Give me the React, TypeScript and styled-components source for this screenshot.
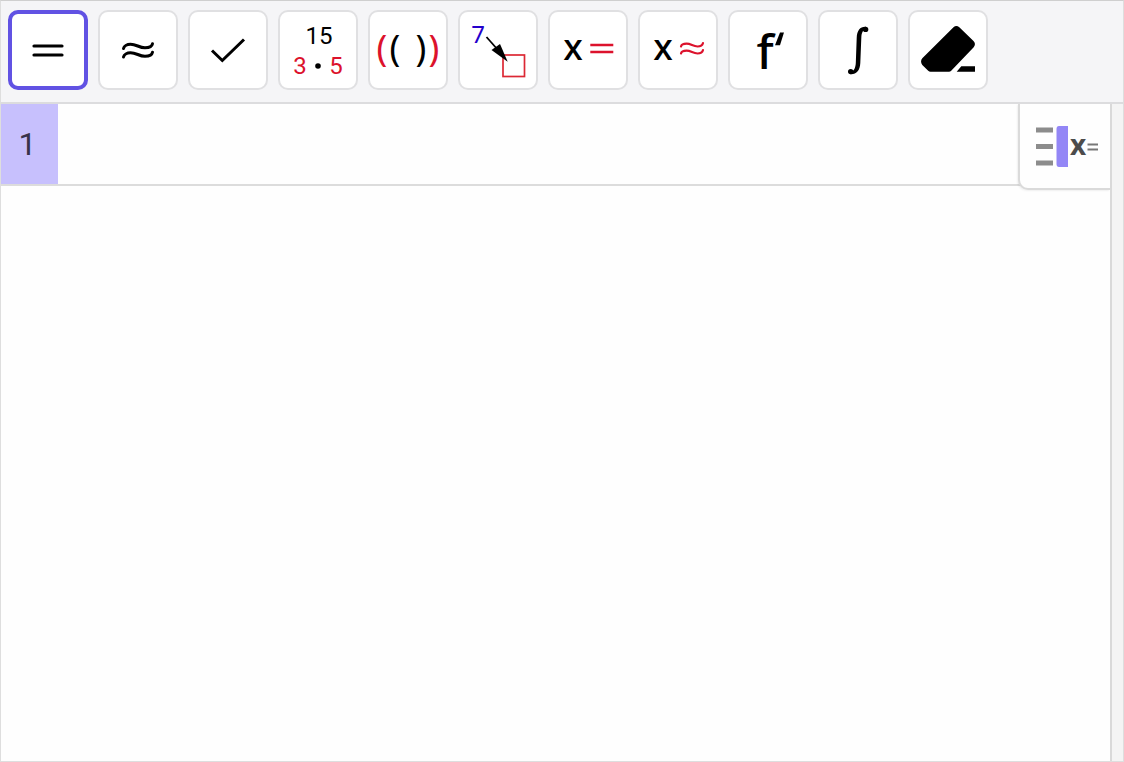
import React from "react";
import styled, { createGlobalStyle } from "styled-components";

const GlobalStyle = createGlobalStyle`
  *, *::before, *::after { box-sizing: border-box; }
  body {
    margin: 0;
    background: #fefefe;
    font-family: "Liberation Sans", Arial, sans-serif;
  }
`;

const Shell = styled.div`
  display: flex;
  flex-direction: column;
  min-height: 100vh;
  border: 1px solid #dedede;
  border-top-color: #cfcfcf;
`;

const Toolbar = styled.div`
  display: flex;
  flex-wrap: wrap;
  gap: 10px;
  padding: 9px 7px 12px;
  background: #f5f5f7;
  border-bottom: 2px solid #dcdcde;
`;

const ToolButton = styled.button<{ $selected?: boolean }>`
  display: flex;
  align-items: center;
  justify-content: center;
  width: 80px;
  height: 80px;
  padding: 0;
  border: ${(p) => (p.$selected ? "4px solid #6152e3" : "2px solid #e0e0e2")};
  border-radius: 10px;
  background: #fff;
  cursor: pointer;
`;

const ToolIcon = styled.svg`
  flex: none;
  width: 80px;
  height: 80px;
`;

const Body = styled.div`
  display: flex;
  flex: 1;
`;

const CasView = styled.main`
  position: relative;
  flex: 1;
  background: #fefefe;
`;

const Row = styled.div`
  display: flex;
  height: 82px;
  border-bottom: 2px solid #dcdcdc;
`;

const RowNumber = styled.label`
  display: flex;
  align-items: center;
  justify-content: center;
  width: 57px;
  padding-right: 4px;
  background: #c7c0fd;
  color: #37324a;
  font-family: Roboto, "Liberation Sans", sans-serif;
  font-size: 32px;
  line-height: 40px;
`;

const RowInput = styled.input`
  flex: 1;
  min-width: 0;
  padding: 0 104px 0 12px;
  border: 0;
  outline: 0;
  background: transparent;
  font: 28px "Liberation Sans", Arial, sans-serif;
`;

const StyleBarButton = styled.button`
  position: absolute;
  top: 0;
  right: 0;
  width: 92px;
  height: 86px;
  padding: 0;
  border: solid #dadada;
  border-width: 0 0 2px 2px;
  border-radius: 0 0 0 10px;
  background: #fefefe;
  box-shadow: -1px 1px 2px rgba(0, 0, 0, 0.06);
  cursor: pointer;
`;

const StyleBarIcon = styled.svg`
  display: block;
  width: 90px;
  height: 84px;
`;

const Gutter = styled.div`
  width: 13px;
  background: #f4f4f4;
  border-left: 2px solid #d9d9d9;
`;

const RED = "#dc122c";
const DIGITS = 'Roboto, "Noto Sans", sans-serif';
const LETTERS = '"Noto Sans", "Open Sans", sans-serif';

type Tool = { name: string; icon: React.ReactNode };

const tools: Tool[] = [
  {
    name: "Evaluate",
    icon: <path d="M26 36H54M26 45H54" stroke="#000" strokeWidth="3.2" strokeLinecap="round" />,
  },
  {
    name: "Numeric",
    icon: (
      <path
        d="M25.5 38.5C26 36 29 34.2 32.5 34.2C38.5 34.2 41 37.8 47 37.8C51 37.8 54 36.5 54.5 33.8M25.5 47C26 44.5 29 42.7 32.5 42.7C38.5 42.7 41 46.3 47 46.3C51 46.3 54 45 54.5 42.3"
        stroke="#000"
        strokeWidth="3"
        strokeLinecap="round"
      />
    ),
  },
  {
    name: "Keep Input",
    icon: <path d="M24 40.5L34.3 50.5L56 29.5" stroke="#000" strokeWidth="3" />,
  },
  {
    name: "Factor",
    icon: (
      <g fontFamily={DIGITS} fontSize="24" textAnchor="middle">
        <text x="41" y="34" fill="#000">15</text>
        <text x="22" y="64" fill={RED}>3</text>
        <circle cx="40" cy="56" r="2.8" fill="#000" />
        <text x="58" y="64" fill={RED}>5</text>
      </g>
    ),
  },
  {
    name: "Expand",
    icon: (
      <g fontFamily={LETTERS} fontSize="36" textAnchor="middle">
        <text x="14" y="51" fill={RED}>(</text>
        <text x="27" y="51" fill="#000">(</text>
        <text x="53" y="51" fill="#000">)</text>
        <text x="66" y="51" fill={RED}>)</text>
      </g>
    ),
  },
  {
    name: "Substitute",
    icon: (
      <>
        <text x="20" y="33" fontFamily={LETTERS} fontSize="24" textAnchor="middle" fill="#2400cc">7</text>
        <rect x="45" y="45" width="21.5" height="21.5" stroke="#dc2834" strokeWidth="1.7" />
        <path d="M28.5 27L40 40" stroke="#000" strokeWidth="1.8" />
        <path d="M49.7 51.7L33.5 40L42 34Z" fill="#000" />
      </>
    ),
  },
  {
    name: "Solve",
    icon: (
      <>
        <text x="25" y="50" fontFamily={LETTERS} fontSize="36" fontWeight="500" textAnchor="middle" fill="#000">x</text>
        <path d="M42.3 35H65.3M42.3 42H65.3" stroke={RED} strokeWidth="2.6" />
      </>
    ),
  },
  {
    name: "Solve Numerically",
    icon: (
      <>
        <text x="25" y="50" fontFamily={LETTERS} fontSize="36" fontWeight="500" textAnchor="middle" fill="#000">x</text>
        <path
          d="M43 36.5C43.5 34.5 46 33.7 48.5 33.7C53 33.7 55 36.5 59.5 36.5C62.5 36.5 64.5 35 65 33M43 43.5C43.5 41.5 46 40.7 48.5 40.7C53 40.7 55 43.5 59.5 43.5C62.5 43.5 64.5 42 65 40"
          stroke={RED}
          strokeWidth="2.2"
          strokeLinecap="round"
        />
      </>
    ),
  },
  {
    name: "Derivative",
    icon: (
      <>
        <text x="37" y="59" fontFamily={LETTERS} fontSize="48" fontWeight="500" textAnchor="middle" fill="#000">f</text>
        <path d="M52 22.5H56L52 35.3H47Z" fill="#000" />
      </>
    ),
  },
  {
    name: "Integral",
    icon: (
      <>
        <path
          d="M48 16.8C42.5 16.3 39 20 38.700 28L37.800 53C37.500 58 36 61 33 61.500L32.500 64.200C38.500 64.500 42 60.500 42.300 53L43.300 28C43.500 22.500 45 19.500 48 19.500Z"
          fill="#000"
        />
        <circle cx="47.600" cy="19.400" r="2.700" fill="#000" />
        <circle cx="32.700" cy="61.600" r="2.700" fill="#000" />
      </>
    ),
  },
  {
    name: "Delete",
    icon: (
      <path
        d="M45.5 17.3Q48.3 14.8 51.3 17.3L65.5 31Q68.3 34 65.7 37.2L43.2 60.8Q42.3 61.7 41 61.7H22.5Q21.2 61.7 20.2 60.8L14.3 55Q11.8 51.5 14.3 48.3ZM53.3 56.3H67V61.7H48.7Z"
        fill="#000"
      />
    ),
  },
];

export default function App() {
  const [selected, setSelected] = React.useState(0);

  return (
    <>
      <GlobalStyle />
      <Shell>
        <Toolbar role="toolbar" aria-label="CAS tools">
          {tools.map((tool, i) => (
            <ToolButton
              key={tool.name}
              type="button"
              aria-label={tool.name}
              aria-pressed={i === selected}
              $selected={i === selected}
              onClick={() => setSelected(i)}
            >
              <ToolIcon viewBox="0 0 80 80" fill="none" aria-hidden="true">
                {tool.icon}
              </ToolIcon>
            </ToolButton>
          ))}
        </Toolbar>
        <Body>
          <CasView>
            <Row>
              <RowNumber htmlFor="cas-row-1">1</RowNumber>
              <RowInput id="cas-row-1" type="text" autoComplete="off" />
            </Row>
            <StyleBarButton type="button" aria-label="Toggle style bar">
              <StyleBarIcon viewBox="0 0 90 84" fill="none" aria-hidden="true">
                <path d="M16 26H33M16 42.5H33M16 59H33" stroke="#8c8c8c" strokeWidth="5" />
                <path d="M48 22V63H39Q36.5 63 36.5 60V25Q36.5 22 39 22Z" fill="#9386f6" />
                <text x="58" y="51" fontFamily='"Open Sans", "Noto Sans", sans-serif' fontSize="28" fontWeight="700" textAnchor="middle" fill="#4c4c4c">x</text>
                <path d="M67.5 40.5H78M67.5 45.5H78" stroke="#777" strokeWidth="1.8" />
              </StyleBarIcon>
            </StyleBarButton>
          </CasView>
          <Gutter />
        </Body>
      </Shell>
    </>
  );
}
